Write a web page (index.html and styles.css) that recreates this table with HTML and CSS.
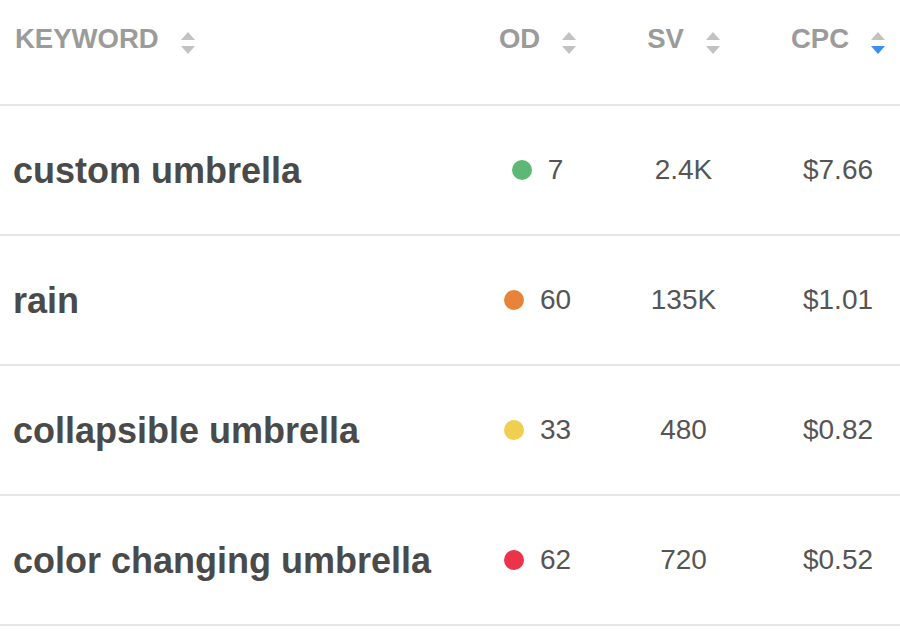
FILE: index.html
```html
<!DOCTYPE html>
<html>
<head>
<meta charset="utf-8">
<link rel="stylesheet" href="styles.css">
</head>
<body>
<div class="table">
  <div class="row head">
    <div class="cell kw"><span class="label">KEYWORD</span><span class="sort"><i class="up"></i><i class="down"></i></span></div>
    <div class="cell num"><span class="label">OD</span><span class="sort"><i class="up"></i><i class="down"></i></span></div>
    <div class="cell num"><span class="label">SV</span><span class="sort"><i class="up"></i><i class="down"></i></span></div>
    <div class="cell num cpc"><span class="label">CPC</span><span class="sort"><i class="up"></i><i class="down active"></i></span></div>
  </div>
  <div class="row">
    <div class="cell kw name">custom umbrella</div>
    <div class="cell num"><span class="dot green"></span>7</div>
    <div class="cell num">2.4K</div>
    <div class="cell num cpc">$7.66</div>
  </div>
  <div class="row">
    <div class="cell kw name">rain</div>
    <div class="cell num"><span class="dot orange"></span>60</div>
    <div class="cell num">135K</div>
    <div class="cell num cpc">$1.01</div>
  </div>
  <div class="row">
    <div class="cell kw name">collapsible umbrella</div>
    <div class="cell num"><span class="dot yellow"></span>33</div>
    <div class="cell num">480</div>
    <div class="cell num cpc">$0.82</div>
  </div>
  <div class="row">
    <div class="cell kw name">color changing umbrella</div>
    <div class="cell num"><span class="dot red"></span>62</div>
    <div class="cell num">720</div>
    <div class="cell num cpc">$0.52</div>
  </div>
</div>
</body>
</html>
```
FILE: styles.css
```css
html, body {
  margin: 0;
  padding: 0;
  background: #ffffff;
}
body {
  font-family: "Liberation Sans", Arial, sans-serif;
  width: 900px;
  height: 644px;
  overflow: hidden;
}
.table {
  display: flex;
  flex-direction: column;
}
.row {
  display: grid;
  grid-template-columns: 1fr 147px 145px 144px;
  align-items: center;
  height: 130px;
  box-sizing: border-box;
  border-bottom: 2px solid #e6e6e6;
}
.row.head {
  height: 106px;
  align-items: start;
  padding-top: 23px;
}
.cell {
  display: flex;
  align-items: center;
}
.kw {
  padding-left: 13px;
}
.head .kw {
  padding-left: 15px;
}
.num {
  justify-content: center;
  font-size: 28px;
  color: #555555;
  line-height: 32px;
}
.cpc {
  padding-left: 20px;
}
.name {
  font-size: 36px;
  font-weight: bold;
  color: #4a4a4a;
  line-height: 40px;
  padding-top: 2px;
}
.head .cell {
  height: 32px;
}
.label {
  font-size: 27.5px;
  font-weight: bold;
  color: #9b9b9b;
  line-height: 32px;
}
.sort {
  display: flex;
  flex-direction: column;
  gap: 6px;
  margin-left: 22px;
  margin-top: 7px;
}
.sort i {
  display: block;
  width: 0;
  height: 0;
  border-left: 7px solid transparent;
  border-right: 7px solid transparent;
}
.sort .up {
  border-bottom: 8px solid #c2c2c2;
}
.sort .down {
  border-top: 8px solid #c2c2c2;
}
.sort .down.active {
  border-top-color: #3d8ef0;
}
.dot {
  width: 20px;
  height: 20px;
  border-radius: 50%;
  margin-right: 16px;
  flex: none;
}
.green { background: #5cb874; }
.orange { background: #e8843a; }
.yellow { background: #eecf4f; }
.red { background: #ec3349; }
```
